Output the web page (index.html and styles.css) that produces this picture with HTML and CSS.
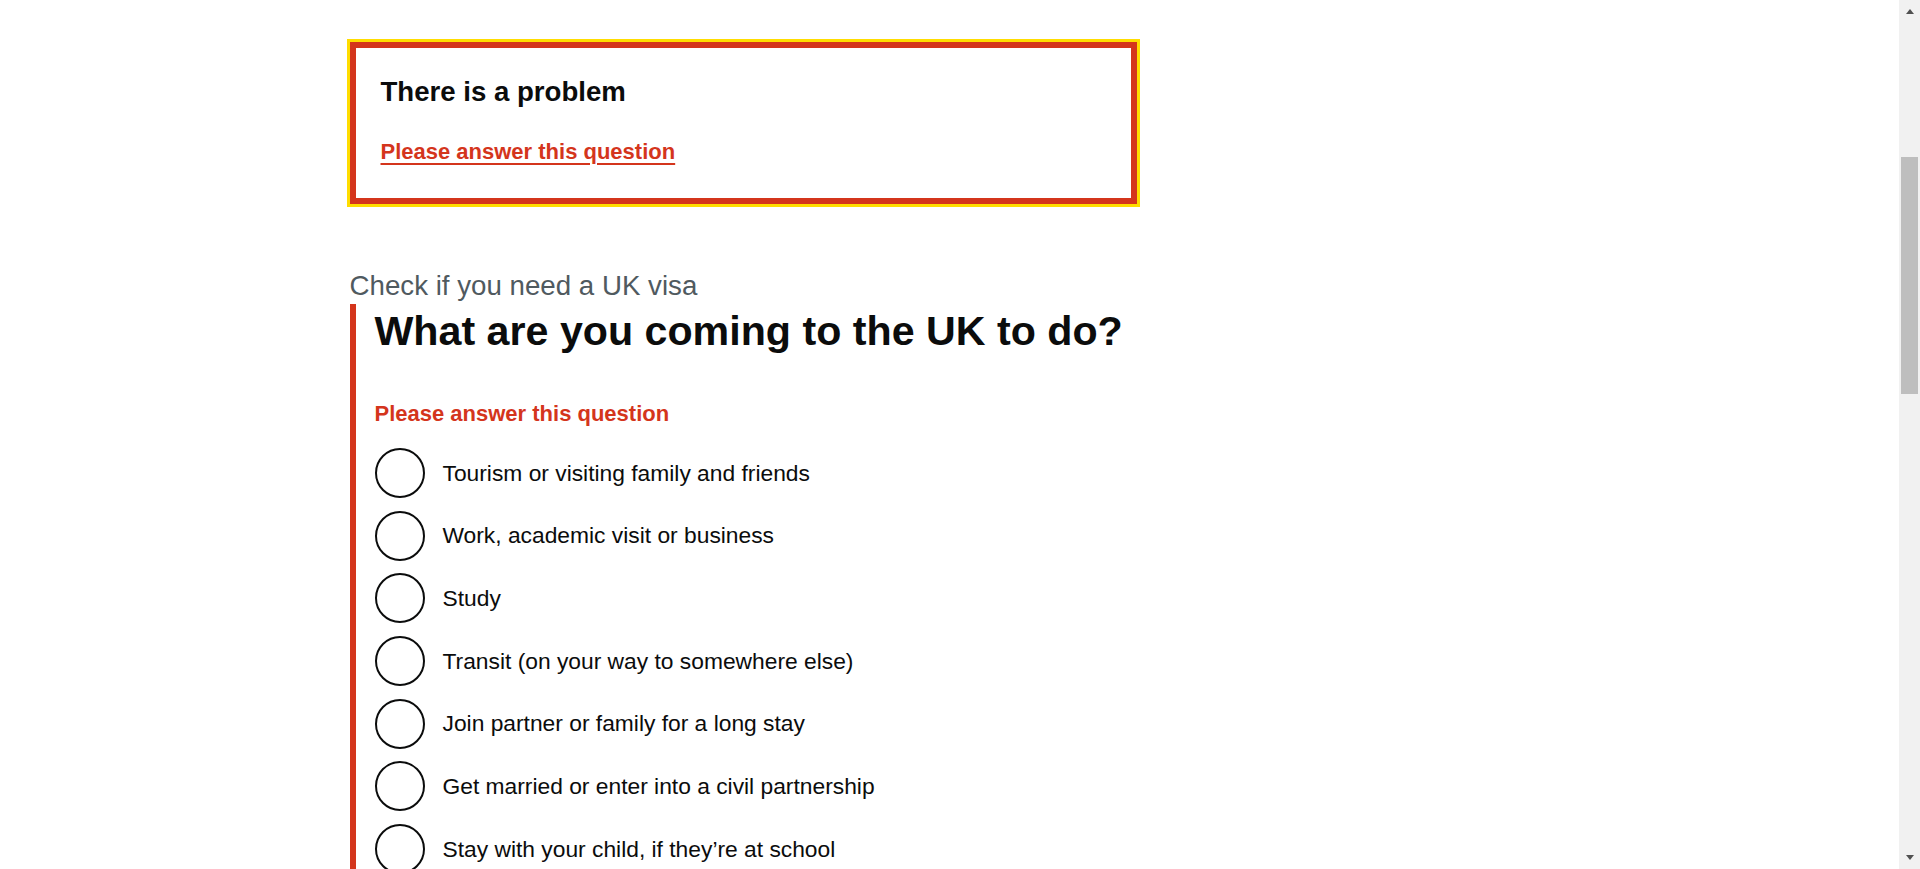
FILE: index.html
```html
<!DOCTYPE html>
<html lang="en">
<head>
<meta charset="utf-8">
<title>What are you coming to the UK to do? - Check if you need a UK visa</title>
<link rel="stylesheet" href="styles.css">
</head>
<body>
<div class="screen">
  <div class="page">
    <div class="container">
      <main class="column">
        <div class="error-summary" role="alert">
          <h2 class="es-title">There is a problem</h2>
          <ul class="es-list">
            <li><a class="es-link" href="#response">Please answer this question</a></li>
          </ul>
        </div>

        <span class="caption">Check if you need a UK visa</span>
        <div class="form-group form-group-error">
          <fieldset class="fieldset">
            <legend class="legend"><h1 class="heading">What are you coming to the UK to do?</h1></legend>
            <p class="error-message" id="response">Please answer this question</p>
            <div class="radios">
              <label class="radio-item"><span class="radio-circle"></span><span class="radio-label">Tourism or visiting family and friends</span></label>
              <label class="radio-item"><span class="radio-circle"></span><span class="radio-label">Work, academic visit or business</span></label>
              <label class="radio-item"><span class="radio-circle"></span><span class="radio-label">Study</span></label>
              <label class="radio-item"><span class="radio-circle"></span><span class="radio-label">Transit (on your way to somewhere else)</span></label>
              <label class="radio-item"><span class="radio-circle"></span><span class="radio-label">Join partner or family for a long stay</span></label>
              <label class="radio-item"><span class="radio-circle"></span><span class="radio-label">Get married or enter into a civil partnership</span></label>
              <label class="radio-item"><span class="radio-circle"></span><span class="radio-label">Stay with your child, if they’re at school</span></label>
            </div>
          </fieldset>
        </div>
      </main>
    </div>
  </div>
  <div class="scrollbar" aria-hidden="true">
    <div class="sb-button"><span class="sb-arrow-up"></span></div>
    <div class="sb-track"><div class="sb-thumb"></div></div>
    <div class="sb-button sb-button-bottom"><span class="sb-arrow-down"></span></div>
  </div>
</div>
</body>
</html>
```
FILE: styles.css
```css
* {
  box-sizing: border-box;
}

html, body {
  margin: 0;
  padding: 0;
  background: #ffffff;
}

body {
  font-family: "Liberation Sans", Arial, sans-serif;
  color: #0b0c0c;
}

.screen {
  display: flex;
  height: 869px;
  overflow: hidden;
}

.page {
  flex: 1;
  min-width: 0;
  overflow: hidden;
}

.container {
  width: 1200px;
  margin: 0 auto;
}

.column {
  display: block;
  width: 787.5px;
  padding-top: 42px;
}

/* Error summary */
.error-summary {
  border: 6px solid #d4351c;
  outline: 3px solid #ffdd00;
  padding: 25px 25px 31px 25px;
  margin-bottom: 63px;
}

.es-title {
  margin: 0 0 25px 0;
  font-size: 27.6px;
  line-height: 38px;
  font-weight: 700;
  color: #0b0c0c;
}

.es-list {
  list-style: none;
  margin: 0;
  padding: 0;
}

.es-list li {
  font-size: 22px;
  line-height: 31px;
  font-weight: 700;
}

.es-link {
  color: #d4351c;
  text-decoration: underline;
  text-decoration-thickness: 1.5px;
  text-underline-offset: 4px;
}

/* Caption */
.caption {
  display: block;
  font-size: 27.7px;
  line-height: 37px;
  color: #505a5f;
}

/* Form group with error */
.form-group-error {
  border-left: 6px solid #d4351c;
  padding-left: 19px;
}

.fieldset {
  margin: 0;
  padding: 0;
  border: 0;
  min-width: 0;
}

.legend {
  padding: 0;
  margin: 0;
  display: block;
}

.heading {
  margin: 0;
  font-size: 41.2px;
  line-height: 54px;
  font-weight: 700;
  color: #0b0c0c;
}

.error-message {
  margin: 40px 0 19px 0;
  font-size: 22px;
  line-height: 31px;
  font-weight: 700;
  color: #d4351c;
}

.radios {
  display: flex;
  flex-direction: column;
  gap: 12.7px;
}

.radio-item {
  display: flex;
  align-items: center;
  min-height: 50px;
}

.radio-circle {
  flex: none;
  width: 50px;
  height: 50px;
  border: 2.5px solid #0b0c0c;
  border-radius: 50%;
  background: #ffffff;
}

.radio-label {
  margin-left: 18px;
  font-size: 22.8px;
  line-height: 31px;
  color: #0b0c0c;
}

/* Scrollbar */
.scrollbar {
  flex: none;
  width: 21px;
  background: #f1f1f1;
  display: flex;
  flex-direction: column;
}

.sb-button {
  flex: none;
  height: 21px;
  display: flex;
  justify-content: center;
  align-items: flex-start;
  padding-top: 9px;
}

.sb-button-bottom {
  align-items: flex-end;
  padding-top: 0;
  padding-bottom: 9px;
}

.sb-arrow-up {
  width: 0;
  height: 0;
  border-left: 4.5px solid transparent;
  border-right: 4.5px solid transparent;
  border-bottom: 5px solid #505050;
}

.sb-arrow-down {
  width: 0;
  height: 0;
  border-left: 4.5px solid transparent;
  border-right: 4.5px solid transparent;
  border-top: 5px solid #505050;
}

.sb-track {
  flex: 1;
  padding: 0 2px;
}

.sb-thumb {
  margin-top: 136px;
  height: 237px;
  background: #bebebe;
}
```
